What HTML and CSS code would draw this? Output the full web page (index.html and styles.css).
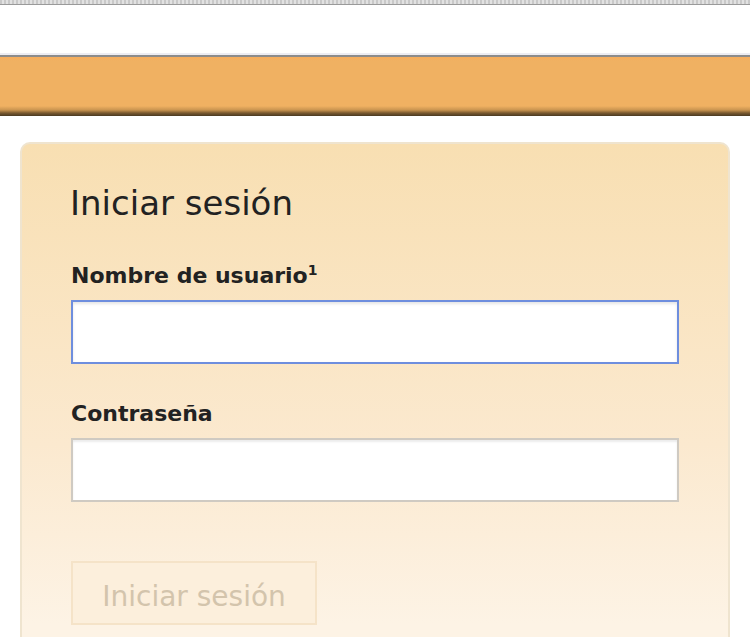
FILE: index.html
```html
<!DOCTYPE html>
<html lang="es">
<head>
  <meta charset="UTF-8">
  <title>Iniciar sesión</title>
  <link rel="stylesheet" href="styles.css">
</head>
<body>

  <div class="topstrip"></div>
  <div class="header"></div>
  <div class="banner"></div>

  <div class="card">
    <h1>Iniciar sesión</h1>
    <form class="login-form">
      <label for="user">Nombre de usuario<sup>1</sup></label>
      <input type="text" id="user" class="field focused">
      <label for="pass">Contraseña</label>
      <input type="password" id="pass" class="field">
      <button type="submit" disabled>Iniciar sesión</button>
    </form>
  </div>

</body>
</html>
```

FILE: styles.css
```css
body {
  font-family: 'DejaVu Sans', Verdana, sans-serif;
  background: #ffffff;
  color: #222222;
  margin: 0;
  padding: 0;
}
.topstrip {
  height: 4px;
  background: repeating-linear-gradient(90deg, #c9c9c9 0px, #c9c9c9 2px, #e2e2e2 2px, #e2e2e2 4px);
  border-bottom: 1px solid #9a9a9a;
}
.header {
  height: 48px;
  background: #ffffff;
  border-bottom: 2px solid #ededf4;
}
.banner {
  height: 59px;
  border-top: 2px solid #8c8c8c;
  background: linear-gradient(180deg, #f5ad5e 0px, #f0b162 4px, #f0b162 49px, #c99450 53px, #7a5a30 56px, #4a3a22 59px);
}
.card {
  margin: 26px 20px 0;
  padding: 39px 50px 40px;
  border: 2px solid #efe4cf;
  border-bottom: none;
  border-radius: 10px 10px 0 0;
  background: linear-gradient(180deg, #f8dfb2 0px, #fbe9cf 300px, #fdf3e5 480px);
  min-height: 460px;
}
h1 {
  margin: 0 0 39px -2px;
  font-size: 34px;
  font-weight: normal;
  color: #222222;
}
.login-form {
  display: flex;
  flex-direction: column;
  align-items: flex-start;
}
label {
  font-size: 22px;
  font-weight: bold;
  color: #222222;
  margin: 0 0 12px -1px;
}
label sup {
  font-size: 14px;
}
.field {
  box-sizing: border-box;
  width: 608px;
  height: 64px;
  margin: 0 0 37px -1px;
  border: 2px solid #cfcac2;
  box-shadow: inset 0 2px 2px rgba(0, 0, 0, 0.08);
  background: #ffffff;
  font-size: 21px;
  padding: 0 12px;
}
.field.focused {
  border-color: #6e8ede;
  box-shadow: inset 0 2px 3px rgba(0, 0, 0, 0.1);
  outline: none;
}
button {
  margin: 22px 0 0 -1px;
  width: 246px;
  height: 64px;
  padding-top: 8px;
  font-family: 'DejaVu Sans', Verdana, sans-serif;
  font-size: 28px;
  color: #d3c4ac;
  background: #fcefdc;
  border: 2px solid #f5e3c8;
}
```
